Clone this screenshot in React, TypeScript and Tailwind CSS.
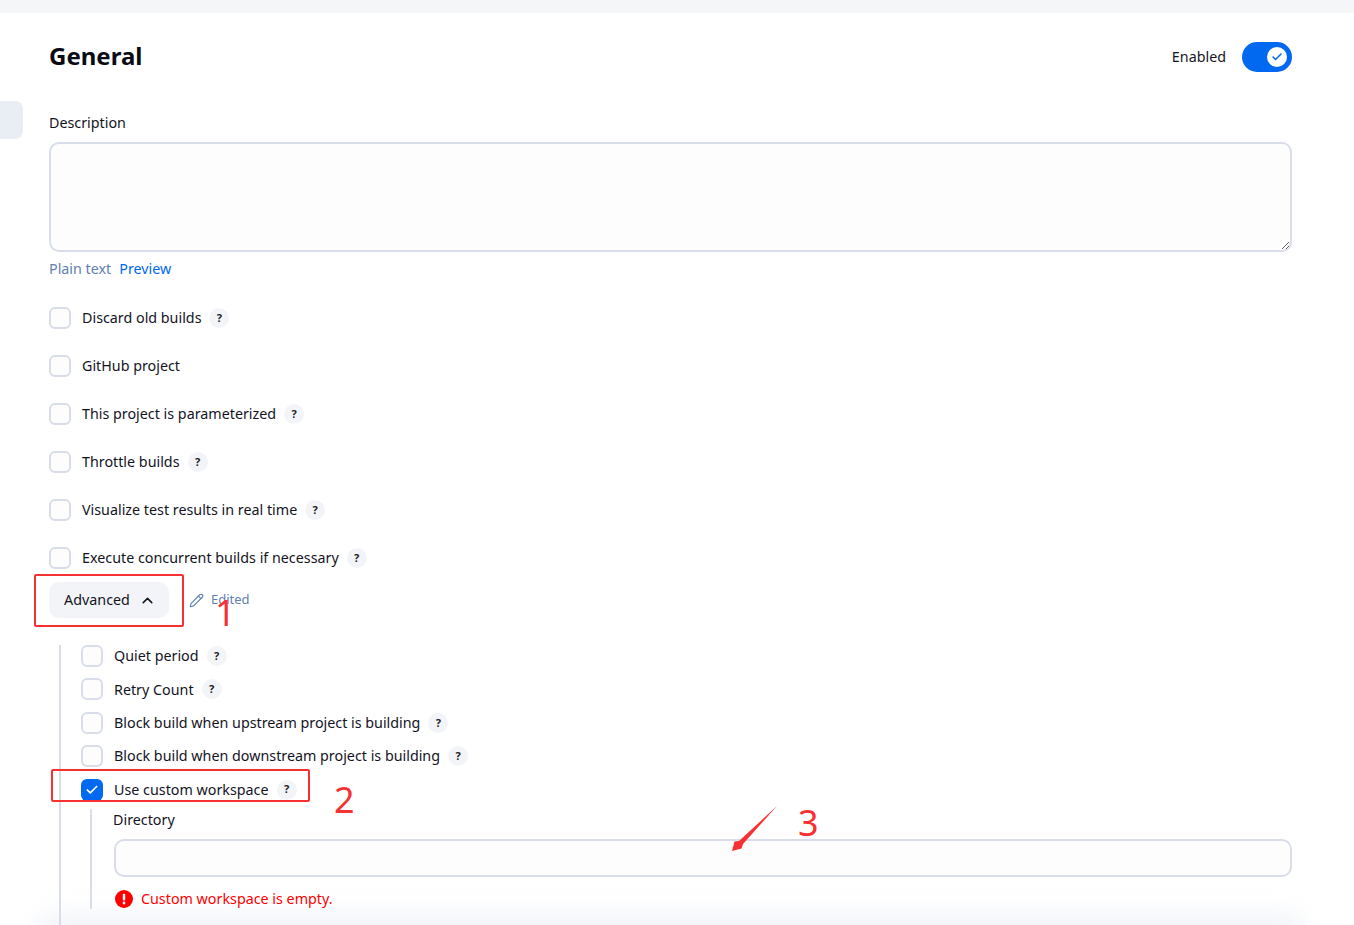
import { Check, ChevronUp, Pencil } from 'lucide-react';

const topRows = [
  { label: 'Discard old builds', help: true },
  { label: 'GitHub project', help: false },
  { label: 'This project is parameterized', help: true },
  { label: 'Throttle builds', help: true },
  { label: 'Visualize test results in real time', help: true },
  { label: 'Execute concurrent builds if necessary', help: true },
];

const advancedRows = [
  'Quiet period',
  'Retry Count',
  'Block build when upstream project is building',
  'Block build when downstream project is building',
];

function Help() {
  return (
    <span className="ml-[8px] flex h-5 w-5 items-center justify-center rounded-full bg-[#f2f4f8] text-[11px] font-bold text-[#1c1c28]">
      ?
    </span>
  );
}

function CheckRow({ label, help, checked }: { label: string; help: boolean; checked?: boolean }) {
  return (
    <div className="flex h-[22px] items-center">
      {checked ? (
        <span className="flex h-[22px] w-[22px] items-center justify-center rounded-[6px] bg-[#0069f0] text-white">
          <Check size={14} strokeWidth={3} />
        </span>
      ) : (
        <span className="h-[22px] w-[22px] rounded-[6px] border-2 border-[#d8dde9] bg-[#fdfdfe]" />
      )}
      <span className="ml-[11px] text-[14.3px] text-[#14141f]">{label}</span>
      {help && <Help />}
    </div>
  );
}

export default function App() {
  return (
    <div className="relative h-[925px] overflow-hidden bg-white font-['Noto_Sans',sans-serif] text-[#14141f]">
      <div className="h-[13px] bg-[#f5f6f8]" />

      {/* side nav active item */}
      <div className="absolute left-0 top-[101px] h-[38px] w-[23px] rounded-r-[8px] bg-[#e9edf4]" />

      {/* bottom fade */}
      <div className="pointer-events-none absolute left-[40px] top-[915px] h-[40px] w-[1260px] bg-[#f1f3f7] blur-[12px]" />

      <main className="relative pl-[49px] pr-[62px]">
        <header className="flex h-[88px] items-center justify-between">
          <h1 className="mb-[2px] text-[24px] font-bold text-[#0b0b14]">General</h1>
          <div className="flex items-center gap-4">
            <span className="text-[14.3px]">Enabled</span>
            <span className="flex h-[30px] w-[50px] items-center justify-end rounded-full bg-[#0069f0] pr-[5px]">
              <span className="flex h-5 w-5 items-center justify-center rounded-full bg-white text-[#0069f0]">
                <Check size={12} strokeWidth={3} />
              </span>
            </span>
          </div>
        </header>

        <label className="mt-[11px] block text-[14.3px] leading-[22px]">Description</label>
        <textarea className="mt-[8px] block h-[110px] w-full rounded-[10px] border-2 border-[#d8dde9] bg-[#fdfdfe]" />
        <div className="mt-[7px] flex gap-2 text-[14.3px] leading-[20px]">
          <span className="text-[#5f80b2]">Plain text</span>
          <span className="text-[#0069f0]">Preview</span>
        </div>

        <div className="mt-[28px] flex flex-col gap-[26px]">
          {topRows.map((row) => (
            <CheckRow key={row.label} label={row.label} help={row.help} />
          ))}
        </div>

        <div className="mt-[13px] flex items-center">
          <button className="flex h-9 w-[120px] items-center justify-center gap-[9px] rounded-[10px] bg-[#f2f4f8] pl-[2px] text-[14.3px]">
            Advanced
            <ChevronUp size={17} strokeWidth={2.2} />
          </button>
          <Pencil className="ml-[20px] text-[#5f80b2]" size={15} strokeWidth={1.8} />
          <span className="ml-[7px] text-[13px] text-[#5f80b2]">Edited</span>
        </div>

        {/* advanced section */}
        <div className="ml-[10px] mt-[27px] h-[400px] border-l-2 border-[#d8dde9] pl-5">
          <div className="flex flex-col gap-[11.4px]">
            {advancedRows.map((label) => (
              <CheckRow key={label} label={label} help />
            ))}
            <CheckRow label="Use custom workspace" help checked />
          </div>

          <div className="ml-[9px] mt-[8.4px] h-[100px] border-l-2 border-[#d8dde9] pl-[21px]">
            <label className="block pt-[1px] text-[14.3px] leading-[20px]">Directory</label>
            <div className="ml-[1px] mt-[9px] h-[38px] rounded-[10px] border-2 border-[#d8dde9] bg-[#fdfdfe]" />
            <div className="mt-[11px] flex items-center gap-[8px] pl-[2px] text-[14.3px] text-[#f00]">
              <svg width="18" height="18" viewBox="0 0 18 18">
                <circle cx="9" cy="9" r="9" fill="#f00" />
                <rect x="7.8" y="3.8" width="2.4" height="6.8" rx="1" fill="#fff" />
                <circle cx="9" cy="13" r="1.4" fill="#fff" />
              </svg>
              Custom workspace is empty.
            </div>
          </div>
        </div>
      </main>

      {/* annotations */}
      <div className="absolute left-[34px] top-[574px] h-[53px] w-[150px] rounded-[2px] border-2 border-[#f73131]" />
      <div className="absolute left-[51px] top-[769px] h-[33px] w-[259px] rounded-[2px] border-2 border-[#f73131]" />
      <span className="absolute left-[215px] top-[589px] text-[36px] font-normal leading-[48px] text-[#f73131]">1</span>
      <span className="absolute left-[334px] top-[776px] text-[36px] font-normal leading-[48px] text-[#f73131]">2</span>
      <span className="absolute left-[798px] top-[799px] text-[36px] font-normal leading-[48px] text-[#f73131]">3</span>
      <svg className="absolute left-[732px] top-[806px]" width="46" height="46" viewBox="0 0 46 46">
        <polygon points="0,45 2.5,35.5 7,35 45,0 11,38 9.5,42.5" fill="#f73131" />
      </svg>
    </div>
  );
}
